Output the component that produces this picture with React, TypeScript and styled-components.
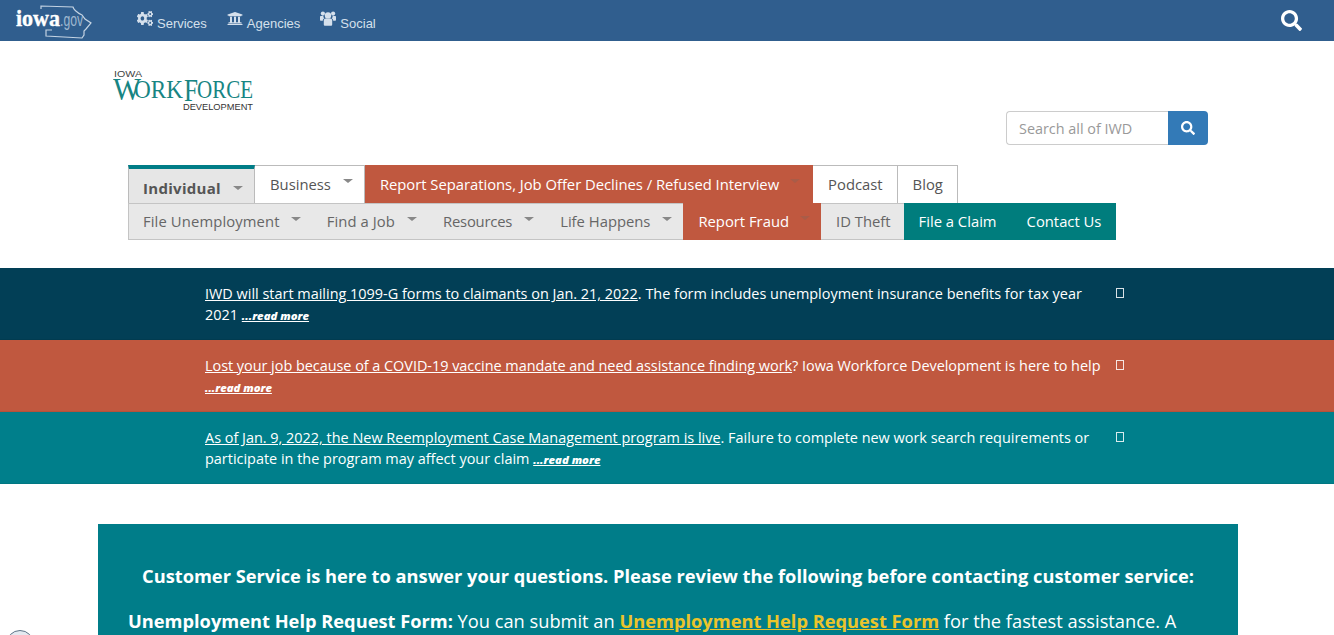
import React from "react";
import styled, { createGlobalStyle } from "styled-components";
import { FaCogs, FaUniversity, FaSearch } from "react-icons/fa";

const Global = createGlobalStyle`
  html, body { margin: 0; padding: 0; background: #fff; }
  body { font-family: "Open Sans", "Liberation Sans", sans-serif; height: 635px; overflow: hidden; position: relative; }
  * { box-sizing: border-box; }
`;

const TopBar = styled.header`
  height: 41px;
  background: #305e8e;
  display: flex;
  align-items: center;
  padding: 0 32px 0 14px;
  color: #d5e0ec;
  font-family: "Liberation Sans", Arial, sans-serif;
  font-size: 13px;
`;
const TopNav = styled.nav`
  display: flex;
  gap: 20px;
  margin-left: 43px;
  flex: 1;
`;
const TopLink = styled.a`
  display: flex;
  align-items: center;
  gap: 4px;
  line-height: 16px;
  padding-top: 6px;
  svg { margin-top: -10px; width: 16px; height: 15px; }
`;
const Header = styled.div`
  height: 124px;
  display: flex;
  justify-content: space-between;
  padding: 27px 126px 0 113px;
`;
const SearchBox = styled.form`
  display: flex;
  width: 202px;
  height: 34px;
  margin-top: 43px;
`;
const SearchInput = styled.div`
  flex: 1;
  border: 1px solid #ccc;
  border-right: 0;
  border-radius: 4px 0 0 4px;
  font-size: 14.4px;
  color: #999;
  padding: 0 12px;
  line-height: 33px;
`;
const SearchButton = styled.div`
  width: 40px;
  background: #337ab7;
  border-radius: 0 4px 4px 0;
  color: #fff;
  display: flex;
  align-items: center;
  justify-content: center;
  svg { width: 14px; height: 14px; }
`;
const Tabs = styled.div`
  margin-left: 128px;
  width: 988px;
  font-size: 14.8px;
`;
const TabRow = styled.div`
  display: flex;
  height: 38px;
`;
const Tab = styled.a<{ $kind?: string; $caret?: boolean }>`
  display: flex;
  align-items: center;
  height: 38px;
  padding: 0 ${(p) => (p.$caret ? 11 : 14)}px 2px 15px;
  color: #555;
  background: #fff;
  border-top: 1px solid #bbb;
  border-right: 1px solid #bbb;
  white-space: nowrap;
  ${(p) => p.$kind === "active" && `
    background: #e6e6e6;
    border-top: 4px solid #007d87;
    border-left: 1px solid #bbb;
    font-weight: 700;
    font-size: 15px;
    letter-spacing: 0.3px;
    padding-left: 14px;
    padding-top: 3px;
    padding-bottom: 0;
  `}
  ${(p) => p.$kind === "alert" && `
    background: #c0583f;
    color: #fff;
    border-color: #c0583f;
    border-right: 0;
    padding-right: 13px;
    letter-spacing: -0.02px;
  `}
`;
const SubRow = styled.div`
  display: flex;
  height: 37px;
  background: #e8e8e8;
  border: 1px solid #c4c4c4;
  border-right: 0;
`;
const SubItem = styled.a<{ $kind?: string; $caret?: boolean; $track?: number }>`
  display: flex;
  align-items: center;
  padding: 0 ${(p) => (p.$caret ? 11 : 13)}px 2px ${(p) => (p.$kind === "first" ? 14 : 15)}px;
  height: 36px;
  color: #666;
  white-space: nowrap;
  letter-spacing: ${(p) => p.$track ?? 0}px;
  ${(p) => p.$kind === "alert" && `
    background: #c0583f;
    color: #fff;
    height: 37px;
    margin-top: -1px;
  `}
  ${(p) => p.$kind === "teal" && `
    background: #007d7d;
    color: #fff;
    height: 37px;
    margin-top: -1px;
    padding-right: 15px;
  `}
`;
const Caret = styled.span<{ $faint?: boolean; $gap?: number; $low?: boolean }>`
  display: inline-block;
  width: 0;
  height: 0;
  margin-left: ${(p) => p.$gap ?? 11}px;
  margin-top: ${(p) => (p.$low ? 0 : -5)}px;
  border-left: 5px solid transparent;
  border-right: 5px solid transparent;
  border-top: 4px solid ${(p) => (p.$faint ? "#a95c48" : "#888")};
`;
const Alerts = styled.section`
  margin-top: 28px;
`;
const Alert = styled.div<{ $bg: string; $track?: number }>`
  height: 72px;
  background: ${(p) => p.$bg};
  color: #fff;
  font-size: 14.45px;
  line-height: 21px;
  letter-spacing: ${(p) => p.$track ?? 0}px;
  padding: 15px 0 0 205px;
  display: flex;
  border-bottom: 1px solid rgba(0, 0, 0, 0.06);
`;
const AlertText = styled.p`
  margin: 0;
  width: 900px;
  a { color: #fff; text-decoration: underline; }
`;
const ReadMore = styled.a`
  font-size: 11.3px;
  font-weight: 800;
  font-style: italic;
`;
const Missing = styled.span`
  width: 8px;
  height: 10px;
  border: 1px solid rgba(255, 255, 255, 0.85);
  margin: 5px 0 0 11px;
`;
const Panel = styled.section`
  margin: 40px 96px 0 98px;
  background: #007d89;
  color: #fff;
  font-size: 18.25px;
  line-height: 26px;
  padding: 39px 30px 0;
  height: 111px;
`;
const PanelHead = styled.h2`
  margin: 0 0 19px;
  font-size: 18.25px;
  line-height: 26px;
  font-weight: 700;
  text-align: center;
  white-space: nowrap;
`;
const PanelText = styled.p`
  margin: 0;
  white-space: nowrap;
  a { color: #ebc42b; font-weight: 700; text-decoration: underline; }
`;
const FloatClip = styled.div`
  position: absolute;
  left: 6px;
  bottom: 0;
  width: 28px;
  height: 5px;
  overflow: hidden;
`;
const FloatCircle = styled.div`
  width: 28px;
  height: 28px;
  border-radius: 50%;
  border: 1px solid #5f7488;
  background: #e3e9f0;
`;

function IowaLogo() {
  return (
    <svg width="80" height="40" viewBox="0 0 80 40">
      <path d="M27 8 L27 5 L59 6 C60 10 64 12 68 14 L71 18 L77 22 L72 28 L70 30 L70 34 L68 37 L32 35 L32 29 L38 29" fill="none" stroke="#c3d3e3" strokeWidth="1.2" />
      <text x="2" y="25" fontFamily="'Liberation Serif', serif" fontWeight="700" fontSize="24" fill="#fff" stroke="#fff" strokeWidth="0.4" textLength="44" lengthAdjust="spacingAndGlyphs">iowa</text>
      <text x="46" y="25" fontFamily="'Liberation Sans', sans-serif" fontSize="18" fill="#9fb8d0" textLength="23" lengthAdjust="spacingAndGlyphs">.gov</text>
    </svg>
  );
}

function UsersIcon() {
  return (
    <svg viewBox="0 0 16 15" fill="currentColor">
      <circle cx="8" cy="4.4" r="3.2" />
      <circle cx="2.9" cy="2.6" r="2.1" />
      <circle cx="13.1" cy="2.6" r="2.1" />
      <path d="M3.8 9.4c0-1 .8-1.9 1.8-1.9h4.8c1 0 1.8.9 1.8 1.9v4c0 .8-.6 1.4-1.3 1.4H5.1c-.7 0-1.3-.6-1.3-1.4z" />
      <path d="M0 6c0-.6.4-1 1-1h2.4c-.2 1 .3 1.9 1 2.3C3.3 7.7 2.8 8.700 2.800 9.800H1c-.6 0-1-.4-1-1z" />
      <path d="M16 6c0-.6-.4-1-1-1h-2.400c.2 1-.3 1.900-1 2.300 1.100.4 1.600 1.400 1.600 2.500H15c.6 0 1-.4 1-1z" />
    </svg>
  );
}

function WorkforceLogo() {
  const serif = "'Liberation Serif', serif";
  const sans = "'Liberation Sans', sans-serif";
  const teal = "#178583";
  const fit = "spacingAndGlyphs" as const;
  return (
    <svg width="146" height="48" viewBox="0 0 146 48">
      <text x="1" y="9" fontFamily={sans} fontSize="9" fill="#444" textLength="28" lengthAdjust={fit}>IOWA</text>
      <text x="0" y="32" fontFamily={serif} fontSize="32" fill={teal} textLength="28" lengthAdjust={fit}>W</text>
      <text x="21" y="30" fontFamily={serif} fontSize="25" fill={teal} textLength="49" lengthAdjust={fit}>ORK</text>
      <text x="71" y="33" fontFamily={serif} fontSize="31" fill={teal} textLength="14" lengthAdjust={fit}>F</text>
      <text x="84" y="30" fontFamily={serif} fontSize="25" fill={teal} textLength="56" lengthAdjust={fit}>ORCE</text>
      <text x="70" y="42" fontFamily={sans} fontSize="9" fill="#333" textLength="70" lengthAdjust={fit}>DEVELOPMENT</text>
    </svg>
  );
}

export default function App() {
  return (
    <>
      <Global />
      <TopBar>
        <IowaLogo />
        <TopNav>
          <TopLink><FaCogs preserveAspectRatio="none" />Services</TopLink>
          <TopLink><FaUniversity preserveAspectRatio="none" />Agencies</TopLink>
          <TopLink><UsersIcon />Social</TopLink>
        </TopNav>
        <FaSearch size={21} color="#fff" />
      </TopBar>
      <Header>
        <WorkforceLogo />
        <SearchBox>
          <SearchInput>Search all of IWD</SearchInput>
          <SearchButton><FaSearch /></SearchButton>
        </SearchBox>
      </Header>
      <Tabs>
        <TabRow>
          <Tab $kind="active" $caret>Individual<Caret $gap={12} $low /></Tab>
          <Tab $caret>Business<Caret $gap={12} /></Tab>
          <Tab $kind="alert" $caret>Report Separations, Job Offer Declines / Refused Interview<Caret $faint /></Tab>
          <Tab>Podcast</Tab>
          <Tab>Blog</Tab>
        </TabRow>
        <SubRow>
          <SubItem $kind="first" $caret $track={0.12}>File Unemployment<Caret /></SubItem>
          <SubItem $caret $track={0.1}>Find a Job<Caret $gap={12} /></SubItem>
          <SubItem $caret $track={-0.2}>Resources<Caret $gap={12} /></SubItem>
          <SubItem $caret>Life Happens<Caret $gap={12} /></SubItem>
          <SubItem $kind="alert" $caret>Report Fraud<Caret $faint $gap={11} /></SubItem>
          <SubItem>ID Theft</SubItem>
          <SubItem $kind="teal">File a Claim</SubItem>
          <SubItem $kind="teal">Contact Us</SubItem>
        </SubRow>
      </Tabs>
      <Alerts>
        <Alert $bg="#023f56">
          <AlertText><a>IWD will start mailing 1099-G forms to claimants on Jan. 21, 2022</a>. The form includes unemployment insurance benefits for tax year 2021 <ReadMore>...read more</ReadMore></AlertText>
          <Missing />
        </Alert>
        <Alert $bg="#c0583f" $track={-0.03}>
          <AlertText><a>Lost your job because of a COVID-19 vaccine mandate and need assistance finding work</a>? Iowa Workforce Development is here to help <ReadMore>...read more</ReadMore></AlertText>
          <Missing />
        </Alert>
        <Alert $bg="#007f8b">
          <AlertText><a>As of Jan. 9, 2022, the New Reemployment Case Management program is live</a>. Failure to complete new work search requirements or participate in the program may affect your claim <ReadMore>...read more</ReadMore></AlertText>
          <Missing />
        </Alert>
      </Alerts>
      <Panel>
        <PanelHead>Customer Service is here to answer your questions. Please review the following before contacting customer service:</PanelHead>
        <PanelText><b>Unemployment Help Request Form:</b> You can submit an <a>Unemployment Help Request Form</a> for the fastest assistance. A</PanelText>
      </Panel>
      <FloatClip><FloatCircle /></FloatClip>
    </>
  );
}
